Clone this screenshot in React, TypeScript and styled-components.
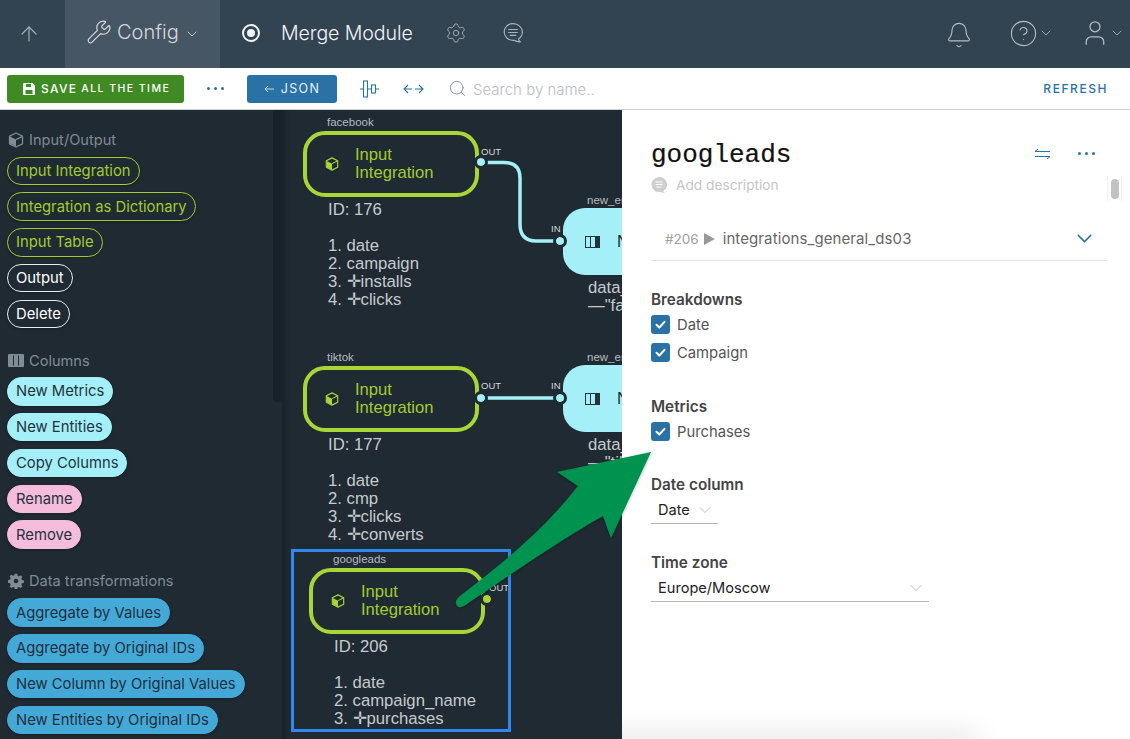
import React from 'react';
import styled, { createGlobalStyle } from 'styled-components';
import { ArrowUp, Wrench, ChevronDown, Settings, Bell, CircleHelp, User, Search } from 'lucide-react';

const GlobalStyle = createGlobalStyle`
  html, body { margin: 0; padding: 0; height: 100%; overflow: hidden; }
  body { font-family: Inter, "Liberation Sans", sans-serif; background: #fff; }
`;

const CubeIcon = ({ size = 16, color = 'currentColor' }: { size?: number; color?: string }) => (
  <svg width={size} height={size} viewBox="0 0 16 16">
    <path d="M8 1 14.5 4.2v7.6L8 15 1.5 11.8V4.2z" fill="none" stroke={color} strokeWidth="1.3" strokeLinejoin="round" />
    <path d="M2 4.6 8 7.6v7L2 11.6z" fill={color} />
    <path d="M8 7.6 14 4.6" stroke={color} strokeWidth="1.2" />
  </svg>
);

const SolidColumnsIcon = ({ color }: { color: string }) => (
  <svg width="16" height="13" viewBox="0 0 16 13">
    <rect width="16" height="13" rx="1" fill={color} />
    <path d="M5.5 1.500v10M10.500 1.500v10" stroke="#1f2a33" strokeWidth="1" />
  </svg>
);

const NodeColumnsIcon = ({ color }: { color: string }) => (
  <svg width="15" height="12" viewBox="0 0 15 12">
    <rect x="0.500" y="0.500" width="14" height="11" fill="none" stroke={color} />
    <path d="M5.500 0.500v11" stroke={color} />
    <rect x="10" y="0" width="5" height="12" fill={color} />
  </svg>
);

const GearSolid = ({ color }: { color: string }) => (
  <svg width="16" height="16" viewBox="0 0 16 16">
    <path
      d="M6.8.8h2.4l.4 2 1.3.6 1.8-1.1 1.7 1.7-1.1 1.8.6 1.3 2 .4v2.4l-2 .4-.6 1.3 1.1 1.8-1.7 1.7-1.8-1.1-1.3.6-.4 2H6.800l-.4-2-1.3-.6-1.800 1.1-1.700-1.700 1.100-1.800-.6-1.300-2-.4V6.900l2-.4.6-1.300-1.100-1.800 1.700-1.700 1.800 1.100 1.300-.6z"
      fill={color}
      fillRule="evenodd"
    />
    <circle cx="8" cy="8" r="2.300" fill="#1f2a33" />
  </svg>
);

const CommentIcon = () => (
  <svg width="22" height="22" viewBox="0 0 20 20" fill="none" stroke="#a9b2ba" strokeWidth="1" strokeLinecap="round">
    <path d="M10 1.500c4.800 0 8.500 3.400 8.500 7.700 0 2.700-1.400 4.900-3.500 6.200 0 1 .5 1.900 1.500 2.600-2 .2-4-.4-5.200-1.400-.3.100-.5.100-.8.100-4.800 0-8.500-3.200-8.500-7.500S5.200 1.500 10 1.500z" />
    <path d="M6 6.800h8M6 9.500h8M7.500 12.200h5" />
  </svg>
);

const Page = styled.div`
  position: relative;
  width: 1130px;
  height: 739px;
  overflow: hidden;
  display: flex;
  flex-direction: column;
`;

const Header = styled.header`
  height: 68px;
  flex: none;
  background: #324352;
  display: flex;
  align-items: center;
  color: #c9d0d6;
`;

const BackCell = styled.div`
  width: 65px;
  height: 100%;
  display: flex;
  align-items: center;
  justify-content: center;
  color: #a3adb6;
  padding-right: 7px;
  box-sizing: border-box;
`;

const ConfigTab = styled.div`
  width: 155px;
  height: 100%;
  background: #465664;
  display: flex;
  align-items: center;
  padding: 0 0 4px 21px;
  box-sizing: border-box;
  font-size: 20px;
  font-weight: 300;
  color: #d4d9dd;
  gap: 5px;
`;

const RecordIcon = styled.span`
  width: 18px;
  height: 18px;
  margin: 0 0 2px 22px;
  border: 2px solid #f2f4f5;
  border-radius: 50%;
  box-sizing: border-box;
  display: flex;
  align-items: center;
  justify-content: center;
  &::after {
    content: '';
    width: 8px;
    height: 8px;
    border-radius: 50%;
    background: #f2f4f5;
  }
`;

const ModuleName = styled.div`
  margin: 0 0 2px 21px;
  font-size: 19.600px;
  font-weight: 300;
  color: #f2f4f5;
  letter-spacing: -0.1px;
`;

const HeaderIcons = styled.div`
  display: flex;
  align-items: center;
  margin: 0 0 2px 32px;
  gap: 35px;
  color: #a9b2ba;
`;

const HeaderRight = styled.div`
  margin-left: auto;
  display: flex;
  align-items: center;
  color: #b7bec4;
  padding: 0 5px 2px 0;
`;

const HeaderAction = styled.div<{ $gap: number }>`
  display: flex;
  align-items: center;
  margin-right: ${(p) => p.$gap}px;
`;

const BellSlot = styled.span`
  display: flex;
  margin-top: 3px;
`;

const Toolbar = styled.div`
  height: 42px;
  flex: none;
  box-sizing: border-box;
  border-bottom: 1px solid #cfcfcf;
  background: #fff;
  display: flex;
  align-items: center;
  padding: 0 22px 0 7px;
`;

const SaveButton = styled.div`
  width: 177px;
  height: 28px;
  background: #3f8a22;
  border-radius: 3px;
  color: #fff;
  display: flex;
  align-items: center;
  padding-left: 16px;
  box-sizing: border-box;
  font-size: 12px;
  font-weight: 500;
  letter-spacing: 1.3px;
  gap: 4px;
  position: relative;
  small {
    font-size: 10.500px;
    font-weight: 500;
    letter-spacing: 1.450px;
  }
`;

const SaveGlyph = styled.svg`
  position: absolute;
  left: 16px;
`;

const SaveLabel = styled.span`
  margin-left: 18px;
`;

const Dots = styled.div<{ $ml: number; $mr?: number }>`
  display: flex;
  gap: 4px;
  margin-left: ${(p) => p.$ml}px;
  margin-right: ${(p) => p.$mr ?? 0}px;
  span {
    width: 3px;
    height: 3px;
    border-radius: 50%;
    background: #2a72a5;
  }
`;

const JsonButton = styled.div`
  width: 90px;
  height: 28px;
  margin-left: 23px;
  background: #2a72a5;
  border-radius: 3px;
  color: #e8f0f5;
  display: flex;
  align-items: center;
  justify-content: center;
  gap: 7px;
  font-size: 12.500px;
  font-weight: 400;
  letter-spacing: 1.400px;
`;

const ToolIcon = styled.svg<{ $ml: number }>`
  margin-left: ${(p) => p.$ml}px;
  flex: none;
`;

const SearchBox = styled.div`
  margin-left: 24px;
  display: flex;
  align-items: center;
  gap: 6px;
  color: #b9bdc1;
  font-size: 15px;
  font-weight: 300;
  flex: 1;
  padding-top: 1px;
  svg {
    color: #80878d;
    margin-top: -2px;
  }
`;

const Refresh = styled.div`
  font-size: 12px;
  font-weight: 500;
  letter-spacing: 1.550px;
  color: #2a72a5;
`;

const Main = styled.div`
  flex: 1;
  display: flex;
  min-height: 0;
`;

const Sidebar = styled.aside`
  position: relative;
  width: 282px;
  flex: none;
  background: #1f2a33;
  padding: 20px 0 0 7px;
  box-sizing: border-box;
  overflow: hidden;
`;

const SidebarThumb = styled.div`
  position: absolute;
  top: 0;
  right: 0;
  width: 9px;
  height: 292px;
  background: #18222a;
  border-radius: 0 0 4px 4px;
`;

const Section = styled.section`
  margin-bottom: 22.500px;
`;

const SectionTitle = styled.div<{ $mb: number }>`
  display: flex;
  align-items: center;
  gap: 5px;
  height: 20px;
  margin-bottom: ${(p) => p.$mb}px;
  color: #7f8b95;
  font-size: 14.600px;
  padding-left: 1px;
`;

const PillList = styled.div`
  display: flex;
  flex-direction: column;
  align-items: flex-start;
  gap: 7.300px;
`;

const pillColors = {
  lime: { bg: 'transparent', fg: '#a2cc2f', line: '#a2cc2f' },
  white: { bg: 'transparent', fg: '#fff', line: '#e8eaec' },
  cyan: { bg: '#a5f0f8', fg: '#24323c', line: '#a5f0f8' },
  pink: { bg: '#f5bcdc', fg: '#24323c', line: '#f5bcdc' },
  blue: { bg: '#45a9d8', fg: '#1f2f3c', line: '#45a9d8' },
};

type PillKind = keyof typeof pillColors;

const Pill = styled.div<{ $kind: PillKind }>`
  height: 28.500px;
  box-sizing: border-box;
  padding: 0 8px;
  border-radius: 15px;
  display: flex;
  align-items: center;
  font-size: 14.800px;
  white-space: nowrap;
  background: ${(p) => pillColors[p.$kind].bg};
  color: ${(p) => pillColors[p.$kind].fg};
  border: 1px solid ${(p) => pillColors[p.$kind].line};
  box-shadow: 0 1px 3px rgba(0, 0, 0, 0.25);
`;

const Canvas = styled.div`
  position: relative;
  width: 340px;
  flex: none;
  overflow: hidden;
  background: linear-gradient(90deg, #18222a 0, #1f2a33 9px);
  font-family: "Liberation Sans", Arial, sans-serif;
`;

const WireLayer = styled.svg`
  position: absolute;
  inset: 0;
`;

const Node = styled.div<{ $x: number; $y: number }>`
  position: absolute;
  left: ${(p) => p.$x}px;
  top: ${(p) => p.$y}px;
`;

const NodeLabel = styled.div`
  position: absolute;
  left: 24px;
  top: -14.500px;
  font-size: 11.500px;
  line-height: 13px;
  color: #b7bcc0;
  white-space: nowrap;
`;

const InputBox = styled.div`
  width: 176px;
  height: 66.500px;
  box-sizing: border-box;
  border: 4px solid #a8d636;
  border-radius: 22px;
  display: flex;
  align-items: center;
  padding-left: 18px;
  gap: 16px;
  color: #a2cc2f;
  font-size: 16.600px;
  line-height: 18px;
`;

const EntityBox = styled.div`
  width: 130px;
  height: 67px;
  border-radius: 22px;
  background: #a5f0f8;
  display: flex;
  align-items: center;
  padding-left: 22px;
  gap: 17px;
  color: #1f2a33;
  font-size: 16.600px;
  line-height: 18px;
  white-space: nowrap;
  box-sizing: border-box;
  svg {
    flex: none;
  }
`;

const Caption = styled.div`
  position: absolute;
  left: 25px;
  top: 70.500px;
  width: 200px;
  font-size: 16.700px;
  line-height: 18px;
  color: #c6cacd;
  white-space: pre;
`;

const PortLabel = styled.div<{ $x: number; $y: number }>`
  position: absolute;
  left: ${(p) => p.$x}px;
  top: ${(p) => p.$y}px;
  font-size: 9.500px;
  line-height: 11px;
  color: #d5d8da;
`;

const Port = styled.div<{ $x: number; $y: number; $color: string }>`
  position: absolute;
  left: ${(p) => p.$x}px;
  top: ${(p) => p.$y}px;
  width: 8px;
  height: 8px;
  border-radius: 50%;
  background: ${(p) => p.$color};
  box-sizing: content-box;
  border: 3px solid #1f2a33;
  background-clip: padding-box;
`;

const SelectionBox = styled.div`
  position: absolute;
  left: 9px;
  top: 439px;
  width: 220px;
  height: 182.500px;
  box-sizing: border-box;
  border: 3px solid #2e88ee;
`;

const Panel = styled.div`
  position: relative;
  flex: 1;
  background: #fff;
  padding: 22px 23px 0 29px;
  box-sizing: border-box;
  overflow: hidden;
`;

const TitleRow = styled.div`
  display: flex;
  align-items: center;
  height: 43px;
`;

const Title = styled.h1`
  margin: 3px 0 0;
  font-family: "Liberation Mono", "Courier New", monospace;
  font-size: 26px;
  font-weight: 400;
  color: #111;
  flex: 1;
  -webkit-text-stroke: 0.2px #111;
`;

const DescRow = styled.div`
  display: flex;
  align-items: center;
  gap: 9px;
  height: 20px;
  color: #c4c6c8;
  font-size: 13.700px;
`;

const PanelScroll = styled.div`
  position: absolute;
  top: 66px;
  right: 8px;
  width: 13px;
  height: 25px;
  border: solid #eee;
  border-width: 0 1px;
  display: flex;
  align-items: center;
  justify-content: center;
  &::after {
    content: '';
    width: 8px;
    height: 20px;
    border-radius: 4px;
    background: #c2c2c2;
  }
`;

const SourceRow = styled.div`
  margin-top: 20px;
  height: 46px;
  border-bottom: 1px solid #e5e5e5;
  display: flex;
  align-items: center;
  padding: 2px 10px 0 14px;
  box-sizing: border-box;
  font-size: 15px;
  color: #666;
`;

const SourceId = styled.span`
  font-size: 13.500px;
  color: #a0a0a0;
`;

const PlayGlyph = styled.span`
  width: 0;
  height: 0;
  margin: 0 8px 0 5px;
  border-left: 11px solid #999;
  border-top: 6px solid transparent;
  border-bottom: 6px solid transparent;
`;

const SourceName = styled.span`
  flex: 1;
  letter-spacing: 0.1px;
`;

const Group = styled.div<{ $mt: number }>`
  margin-top: ${(p) => p.$mt}px;
`;

const GroupTitle = styled.div`
  font-size: 15.300px;
  font-weight: 600;
  line-height: 18px;
  color: #444;
`;

const CheckRow = styled.div`
  display: flex;
  align-items: center;
  gap: 7px;
  height: 19px;
  margin: 6px 0 9px;
  font-size: 14.800px;
  color: #555;
`;

const CheckBox = styled.span`
  width: 19px;
  height: 19px;
  flex: none;
  border-radius: 3px;
  background: #2a72a5;
  display: flex;
  align-items: center;
  justify-content: center;
`;

const SelectLine = styled.div<{ $w: number }>`
  width: ${(p) => p.$w}px;
  height: 28px;
  margin-top: 2px;
  box-sizing: border-box;
  border-bottom: 1px solid #b5b5b5;
  display: flex;
  align-items: center;
  justify-content: space-between;
  padding: 0 3px 0 7px;
  font-size: 14.600px;
  color: #222;
  svg {
    color: #b0b0b0;
  }
`;

const BottomShade = styled.div`
  position: absolute;
  left: -40px;
  bottom: -20px;
  width: 395px;
  height: 20px;
  box-shadow: 0 0 32px rgba(0, 0, 0, 0.16);
`;

const ArrowLayer = styled.svg`
  position: absolute;
  left: 0;
  top: 0;
  pointer-events: none;
`;

const sections: { icon: React.ReactNode; title: string; gap: number; pills: { text: string; kind: PillKind }[] }[] = [
  {
    icon: <CubeIcon color="#7f8b95" />,
    title: 'Input/Output',
    gap: 6.500,
    pills: [
      { text: 'Input Integration', kind: 'lime' },
      { text: 'Integration as Dictionary', kind: 'lime' },
      { text: 'Input Table', kind: 'lime' },
      { text: 'Output', kind: 'white' },
      { text: 'Delete', kind: 'white' },
    ],
  },
  {
    icon: <SolidColumnsIcon color="#7f8b95" />,
    title: 'Columns',
    gap: 6.500,
    pills: [
      { text: 'New Metrics', kind: 'cyan' },
      { text: 'New Entities', kind: 'cyan' },
      { text: 'Copy Columns', kind: 'cyan' },
      { text: 'Rename', kind: 'pink' },
      { text: 'Remove', kind: 'pink' },
    ],
  },
  {
    icon: <GearSolid color="#7f8b95" />,
    title: 'Data transformations',
    gap: 7,
    pills: [
      { text: 'Aggregate by Values', kind: 'blue' },
      { text: 'Aggregate by Original IDs', kind: 'blue' },
      { text: 'New Column by Original Values', kind: 'blue' },
      { text: 'New Entities by Original IDs', kind: 'blue' },
    ],
  },
];

const Check = () => (
  <svg width="13" height="13" viewBox="0 0 13 13" fill="none" stroke="#fff" strokeWidth="2" strokeLinecap="round" strokeLinejoin="round">
    <path d="M2.500 6.800 5.300 9.500 10.500 3.800" />
  </svg>
);

const InputNode = ({ x, y, name, caption }: { x: number; y: number; name: string; caption: string }) => (
  <Node $x={x} $y={y}>
    <NodeLabel>{name}</NodeLabel>
    <InputBox>
      <CubeIcon size={14} color="#a8d636" />
      <span>
        Input
        <br />
        Integration
      </span>
    </InputBox>
    <Caption>{caption}</Caption>
  </Node>
);

const EntityNode = ({ x, y, caption }: { x: number; y: number; caption: string }) => (
  <Node $x={x} $y={y}>
    <NodeLabel>new_entities</NodeLabel>
    <EntityBox>
      <NodeColumnsIcon color="#24323c" />
      New Entities
    </EntityBox>
    <Caption>{caption}</Caption>
  </Node>
);

export default function App() {
  return (
    <Page>
      <GlobalStyle />
      <Header>
        <BackCell>
          <ArrowUp size={24} strokeWidth={1.200} />
        </BackCell>
        <ConfigTab>
          <Wrench size={26} strokeWidth={1.100} />
          Config
          <ChevronDown size={16} strokeWidth={1.300} style={{ marginTop: 4 }} />
        </ConfigTab>
        <RecordIcon />
        <ModuleName>Merge Module</ModuleName>
        <HeaderIcons>
          <Settings size={22} strokeWidth={1} />
          <CommentIcon />
        </HeaderIcons>
        <HeaderRight>
          <HeaderAction $gap={36}>
            <BellSlot>
              <Bell size={28} strokeWidth={1} />
            </BellSlot>
          </HeaderAction>
          <HeaderAction $gap={26}>
            <CircleHelp size={29} strokeWidth={0.900} />
            <ChevronDown size={16} strokeWidth={1.200} />
          </HeaderAction>
          <HeaderAction $gap={0}>
            <User size={30} strokeWidth={1} />
            <ChevronDown size={16} strokeWidth={1.200} style={{ marginLeft: -1 }} />
          </HeaderAction>
        </HeaderRight>
      </Header>

      <Toolbar>
        <SaveButton>
          <SaveGlyph width="12" height="12" viewBox="0 0 12 12">
            <path d="M1 0h8.500L12 2.500V11a1 1 0 0 1-1 1H1a1 1 0 0 1-1-1V1a1 1 0 0 1 1-1z" fill="#fff" />
            <rect x="3" y="1" width="5" height="3" fill="#3f8a22" />
            <rect x="2.500" y="7" width="7" height="4" fill="#3f8a22" />
          </SaveGlyph>
          <SaveLabel>SAVE</SaveLabel>
          <small>ALL THE TIME</small>
        </SaveButton>
        <Dots $ml={23}>
          <span />
          <span />
          <span />
        </Dots>
        <JsonButton>
          <svg width="10" height="10" viewBox="0 0 10 10" fill="none" stroke="#c5d7e3" strokeWidth="1">
            <path d="M10 5H1M4 2 1 5l3 3" />
          </svg>
          JSON
        </JsonButton>
        <ToolIcon $ml={23} width="19" height="18" viewBox="0 0 19 18" fill="none" stroke="#2a72a5" strokeWidth="1.100">
          <rect x="3.500" y="1" width="4" height="16" />
          <rect x="11.500" y="5" width="4" height="8" />
          <path d="M0 9h3.500M7.500 9h4M15.500 9H19" />
        </ToolIcon>
        <ToolIcon $ml={24} width="21" height="10" viewBox="0 0 21 10" fill="none" stroke="#2a72a5" strokeWidth="1.100">
          <path d="M5 1 1 5l4 4M16 1l4 4-4 4M1 5h8M12 5h8" />
        </ToolIcon>
        <SearchBox>
          <Search size={19} strokeWidth={1.100} />
          Search by name..
        </SearchBox>
        <Refresh>REFRESH</Refresh>
      </Toolbar>

      <Main>
        <Sidebar>
          <SidebarThumb />
          {sections.map((section) => (
            <Section key={section.title}>
              <SectionTitle $mb={section.gap}>
                {section.icon}
                {section.title}
              </SectionTitle>
              <PillList>
                {section.pills.map((pill) => (
                  <Pill key={pill.text} $kind={pill.kind}>
                    {pill.text}
                  </Pill>
                ))}
              </PillList>
            </Section>
          ))}
        </Sidebar>

        <Canvas>
          <EntityNode x={281} y={98} caption={'data_source\n—"facebook"'} />
          <EntityNode x={281} y={255} caption={'data_source\n—"tiktok"'} />
          <InputNode x={21} y={20.500} name="facebook" caption={'ID: 176\n\n1. date\n2. campaign\n3. ✛installs\n4. ✛clicks'} />
          <InputNode x={21} y={255.500} name="tiktok" caption={'ID: 177\n\n1. date\n2. cmp\n3. ✛clicks\n4. ✛converts'} />
          <InputNode x={27} y={457.500} name="googleads" caption={'ID: 206\n\n1. date\n2. campaign_name\n3. ✛purchases'} />

          <WireLayer width="340" height="629" fill="none" stroke="#a5f0f8" strokeWidth="3.500">
            <path d="M199 52.500H222Q238 52.500 238 68V114Q238 131 254 131H278" />
            <path d="M199 288H278" />
          </WireLayer>
          <PortLabel $x={199} $y={36}>OUT</PortLabel>
          <PortLabel $x={269} $y={113}>IN</PortLabel>
          <PortLabel $x={199} $y={270}>OUT</PortLabel>
          <PortLabel $x={269} $y={270}>IN</PortLabel>
          <PortLabel $x={207} $y={472}>OUT</PortLabel>
          <Port $x={192} $y={45} $color="#a5f0f8" />
          <Port $x={271} $y={124} $color="#a5f0f8" />
          <Port $x={192} $y={281} $color="#a5f0f8" />
          <Port $x={271} $y={281} $color="#a5f0f8" />
          <Port $x={198} $y={482} $color="#a8d636" />
          <SelectionBox />
        </Canvas>

        <Panel>
          <TitleRow>
            <Title>googleads</Title>
            <ToolIcon $ml={0} width="17" height="12" viewBox="0 0 17 12" fill="none" stroke="#2a72a5" strokeWidth="1">
              <path d="M4 1 1 3.500h15M13 11l3-2.500H1" />
            </ToolIcon>
            <Dots $ml={27} $mr={12}>
              <span />
              <span />
              <span />
            </Dots>
          </TitleRow>
          <DescRow>
            <svg width="16" height="16" viewBox="0 0 16 16">
              <path d="M8 0a8 7.500 0 0 1 4 14l2 2-5-1A8 7.500 0 1 1 8 0z" fill="#cfcfcf" />
              <path d="M4.500 5h7M4.500 7.500h7M5.500 10h5" stroke="#fff" strokeWidth="1.200" />
            </svg>
            Add description
          </DescRow>
          <PanelScroll />
          <SourceRow>
            <SourceId>#206</SourceId>
            <PlayGlyph />
            <SourceName>integrations_general_ds03</SourceName>
            <ChevronDown size={25} strokeWidth={1.400} color="#2a72a5" />
          </SourceRow>
          <Group $mt={30}>
            <GroupTitle>Breakdowns</GroupTitle>
            <CheckRow>
              <CheckBox>
                <Check />
              </CheckBox>
              Date
            </CheckRow>
            <CheckRow>
              <CheckBox>
                <Check />
              </CheckBox>
              Campaign
            </CheckRow>
          </Group>
          <Group $mt={36}>
            <GroupTitle>Metrics</GroupTitle>
            <CheckRow>
              <CheckBox>
                <Check />
              </CheckBox>
              Purchases
            </CheckRow>
          </Group>
          <Group $mt={35}>
            <GroupTitle>Date column</GroupTitle>
            <SelectLine $w={67}>
              Date
              <ChevronDown size={20} strokeWidth={1} />
            </SelectLine>
          </Group>
          <Group $mt={30}>
            <GroupTitle>Time zone</GroupTitle>
            <SelectLine $w={278}>
              Europe/Moscow
              <ChevronDown size={20} strokeWidth={1} />
            </SelectLine>
          </Group>
          <BottomShade />
        </Panel>
      </Main>

      <ArrowLayer width="1130" height="739" viewBox="0 0 1130 739">
        <defs>
          <filter id="arrowShadow" x="-10%" y="-10%" width="120%" height="120%">
            <feDropShadow dx="0" dy="1" stdDeviation="1.500" floodColor="#000" floodOpacity="0.3" />
          </filter>
        </defs>
        <path
          d="M651 452 611 538 603 516C560 540 510 575 464 606Q458 609 456 604Q455 600 460 596C505 562 548 525 578 486L557 472Z"
          fill="#03924f"
          filter="url(#arrowShadow)"
        />
      </ArrowLayer>
    </Page>
  );
}
